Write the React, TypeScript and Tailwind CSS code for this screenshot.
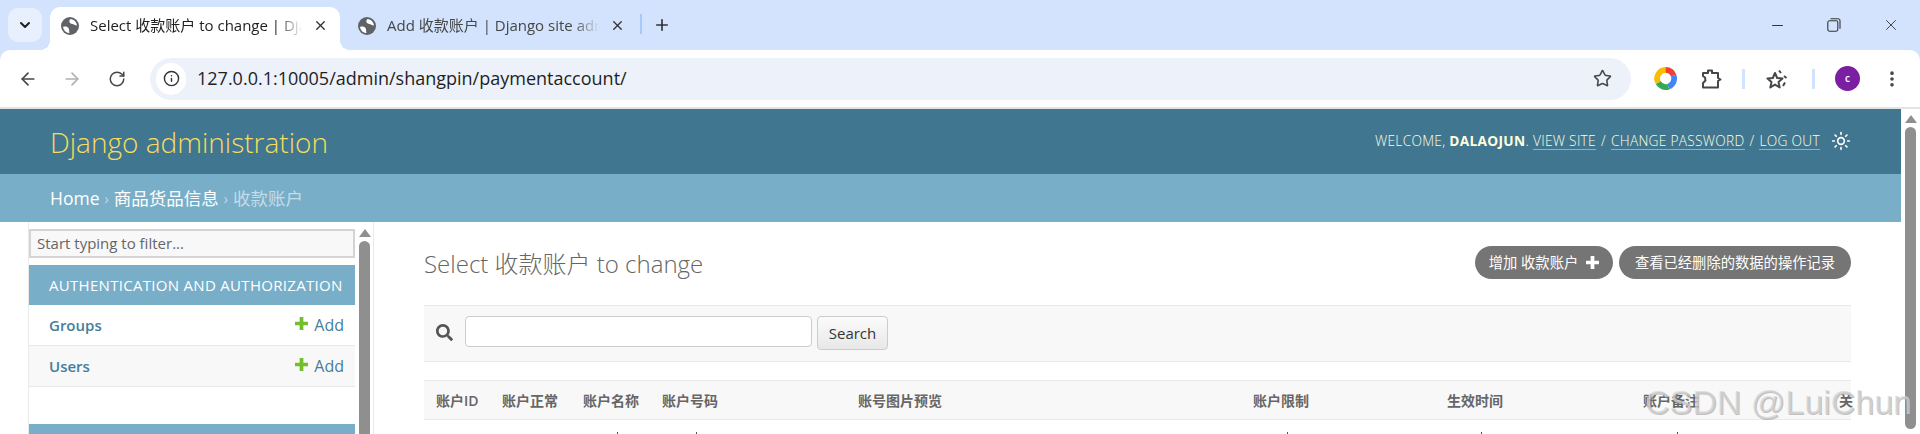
import { ArrowLeft, ArrowRight, ChevronDown, EllipsisVertical, Info, Minus, Plus, RotateCw, Star, Sun, X } from 'lucide-react'
import { FaSearch } from 'react-icons/fa'

const columns = ['账户ID', '账户正常', '账户名称', '账户号码', '账号图片预览', '账户限制', '生效时间', '账户备注', '关']
const cutOffCells = [false, false, true, true, false, true, true, true, false]

const Globe = () => (
  <svg viewBox="0 0 16 16" className="w-[18px] h-[18px] shrink-0">
    <circle cx="8" cy="8" r="8" fill="#5f6368" />
    <path d="M8.500 1.800 C6.500 3.500 7.500 6 10 6.200 C11.500 6.300 12 7.500 14.200 7.500 C14 4.800 11.500 2 8.500 1.800z" fill="#fff" />
    <path d="M1.800 8.800 C3.500 8 6 8.500 6.800 10 C7.500 11.500 7 13 7.500 14.200 C4.500 14 2.200 11.800 1.800 8.800z" fill="#fff" />
  </svg>
)

const ThickPlus = ({ className }: { className: string }) => (
  <svg viewBox="0 0 14 14" className={className} fill="currentColor">
    <path d="M5 0h4v5h5v4H9v5H5V9H0V5h5z" />
  </svg>
)

const Tab = ({ title, active }: { title: string; active?: boolean }) => (
  <div className={`relative h-[43px] w-[290px] shrink-0 flex items-center pl-[11px] pr-[12px] pb-[6px] gap-[11px] rounded-t-[10px] ${active ? "bg-white text-[#1f1f1f] before:content-[''] before:absolute before:left-[-10px] before:bottom-0 before:w-[10px] before:h-[10px] before:bg-[radial-gradient(circle_at_0_0,transparent_10px,white_10px)] after:content-[''] after:absolute after:right-[-10px] after:bottom-0 after:w-[10px] after:h-[10px] after:bg-[radial-gradient(circle_at_100%_0,transparent_10px,white_10px)]" : 'text-[#444746]'}`}>
    <Globe />
    <span className="flex-1 min-w-0 overflow-hidden whitespace-nowrap text-[15px] [mask-image:linear-gradient(to_right,black_88%,transparent)]">{title}</span>
    <X size={15} strokeWidth={2.2} className="shrink-0 text-[#333]" />
  </div>
)

const ModelRow = ({ name, alt }: { name: string; alt?: boolean }) => (
  <div className={`h-[41px] flex items-center justify-between pl-5 pr-[11px] border-b border-[#e8e8e8] text-[15px] ${alt ? 'bg-[#f8f8f8]' : 'bg-white'}`}>
    <span className="font-semibold text-[#447e9b]">{name}</span>
    <span className="flex items-center text-[16px] text-[#447e9b]">
      <ThickPlus className="text-[#70bf2b] w-[13px] h-[13px] mr-[6px] -mt-1" />
      Add
    </span>
  </div>
)

export default function App() {
  return (
    <div className="w-[1920px] h-[434px] overflow-hidden relative flex flex-col bg-white font-['Open_Sans','Noto_Sans_CJK_SC',sans-serif]">
      {/* tab strip */}
      <div className="h-[50px] bg-[#d3e3fd] flex items-end shrink-0">
        <div className="w-[34px] h-[34px] ml-2 mb-2 rounded-[10px] bg-[#e9f0fd] flex items-center justify-center shrink-0">
          <ChevronDown size={16} strokeWidth={3} className="text-[#1f1f1f]" />
        </div>
        <div className="ml-2 flex gap-[7px]">
          <Tab title="Select 收款账户 to change | Django site admin" active />
          <Tab title="Add 收款账户 | Django site admin" />
        </div>
        <div className="w-[2px] h-5 bg-[#a8c7fa] mb-[16px] ml-[3px]" />
        <Plus size={18} strokeWidth={2.2} className="ml-[11px] mb-[16px] text-[#333]" />
        <div className="ml-auto flex items-center gap-[41px] pr-[20px] self-center text-[#333]">
          <Minus size={17} strokeWidth={1.4} />
          <svg viewBox="0 0 14 14" className="w-[14px] h-[14px]" fill="none" stroke="#333" strokeWidth="1.1">
            <rect x="0.8" y="2.8" width="10" height="10.4" rx="1.6" />
            <path d="M3.5 0.8h7.5a2 2 0 0 1 2 2v8" />
          </svg>
          <X size={18} strokeWidth={1.2} />
        </div>
      </div>

      {/* toolbar */}
      <div className="bg-[#d3e3fd] shrink-0">
        <div className="h-[57px] bg-white rounded-t-[10px] flex items-center pl-[18px]">
          <ArrowLeft size={20} className="shrink-0 text-[#474747]" />
          <ArrowRight size={20} className="shrink-0 ml-[24px] text-[#b0b0b0]" />
          <RotateCw size={18} className="shrink-0 ml-[26px] text-[#474747]" />
          <div className="shrink-0 ml-[24px] w-[1481px] h-[42px] rounded-full bg-[#ecf1fa] flex items-center pl-[6px] pr-[19px]">
            <div className="w-[30px] h-[32px] rounded-full bg-white flex items-center justify-center">
              <Info size={17} strokeWidth={2} className="text-[#333]" />
            </div>
            <span className="ml-[11px] text-[18px] text-[#1f1f1f]">127.0.0.1:10005/admin/shangpin/paymentaccount/</span>
            <Star size={19} strokeWidth={2} className="ml-auto text-[#474747]" />
          </div>
          <svg viewBox="0 0 24 24" className="shrink-0 w-[23px] h-[23px] ml-[23px]" fill="none" strokeWidth="6">
            <path d="M4.5 16.5 A9 9 0 0 1 12 3" stroke="#fbbc04" />
            <path d="M12 3 A9 9 0 0 1 20.5 9" stroke="#ea4335" />
            <path d="M20.5 9 A9 9 0 0 1 15 20.5" stroke="#4285f4" />
            <path d="M15 20.5 A9 9 0 0 1 4.5 16.5" stroke="#34a853" />
          </svg>
          <svg viewBox="0 0 24 24" className="shrink-0 w-[24px] h-[24px] ml-[22px]" fill="none" stroke="#474747" strokeWidth="2" strokeLinejoin="round">
            <path d="M4 6h5V3.500h4V6h6v5l2.500 1.500L19 14v6.500H4V16l2.500-2.500L6 10.500 4 9z" />
          </svg>
          <div className="shrink-0 w-[3px] h-5 bg-[#d3e3fd] ml-[19px]" />
          <svg viewBox="0 0 24 24" className="shrink-0 w-[24px] h-[24px] ml-[20px]" fill="none" stroke="#474747" strokeWidth="2" strokeLinejoin="round">
            <path d="M10 6l2.200 5 5.300.5-4 3.600 1.200 5.300-4.700-2.800-4.700 2.800 1.200-5.300-4-3.600 5.300-.5z" />
            <path d="M14 3.500l2 2.500M19 9l2.500 2M18 19l2-3.500" />
          </svg>
          <div className="shrink-0 w-[3px] h-5 bg-[#d3e3fd] ml-[23px]" />
          <div className="shrink-0 w-[25px] h-[25px] rounded-full bg-[#7b1fa2] text-white text-[10px] font-semibold flex items-center justify-center ml-[20px]">c</div>
          <EllipsisVertical size={20} strokeWidth={2.4} className="shrink-0 ml-[22px] text-[#474747]" />
        </div>
      </div>
      <div className="h-[2px] bg-[#e2e3e3] shrink-0" />

      {/* page + browser scrollbar */}
      <div className="flex-1 min-h-0 flex">
        <div className="flex-1 min-w-0 flex flex-col">
          <div className="h-[65px] bg-[#417690] flex items-center justify-between pl-[50px] pr-[50px] shrink-0">
            <span className="text-[28px] font-light text-[#f5dd5d] leading-none">Django administration</span>
            <div className="flex items-center text-[13.700px] font-light text-[#ffffe0] tracking-[0.3px]">
              <span>WELCOME, <strong className="font-bold">DALAOJUN</strong>. </span>
              <span className="ml-1 border-b border-[#8fb1c4] leading-[17px]">VIEW SITE</span>
              <span className="mx-[5px]">/</span>
              <span className="border-b border-[#8fb1c4] leading-[17px]">CHANGE PASSWORD</span>
              <span className="mx-[5px]">/</span>
              <span className="border-b border-[#8fb1c4] leading-[17px]">LOG OUT</span>
              <Sun size={20} className="ml-[11px] text-white" />
            </div>
          </div>
          <div className="h-[48px] bg-[#79aec8] flex items-center pl-[50px] text-[17.500px] text-white shrink-0">
            <span>Home</span>
            <span className="mx-[5px] text-[#c4dce8] text-[14px]">›</span>
            <span>商品货品信息</span>
            <span className="mx-[5px] text-[#c4dce8] text-[14px]">›</span>
            <span className="text-[#c4dce8]">收款账户</span>
          </div>

          <div className="flex-1 min-h-0 flex overflow-hidden">
            {/* app sidebar */}
            <div className="ml-[28px] w-[346px] shrink-0 border-x border-[#eaeaea] flex">
              <div className="w-[326px] shrink-0 pt-[7px]">
                <div className="h-[29px] border-2 border-[#d4d4d4] bg-[#f8f8f8] flex items-center pl-[6px] text-[15px] text-[#666]">Start typing to filter...</div>
                <div className="mt-[7px] h-10 bg-[#79aec8] flex items-center pl-5 text-[15px] text-white tracking-[0.3px] whitespace-nowrap">AUTHENTICATION AND AUTHORIZATION</div>
                <ModelRow name="Groups" />
                <ModelRow name="Users" alt />
                <div className="mt-[37px] h-10 bg-[#79aec8]" />
              </div>
              <div className="flex-1 flex flex-col items-center pt-[7px] pr-[2px] pl-[3px]">
                <div className="w-0 h-0 border-x-[6px] border-x-transparent border-b-[8px] border-b-[#8f8f8f]" />
                <div className="mt-[4px] w-[11px] flex-1 rounded-t-full bg-[#8f8f8f]" />
              </div>
            </div>

            {/* change list */}
            <div className="flex-1 min-w-0 pl-[50px] pr-[50px]">
              <div className="h-[83px] flex justify-between pt-6">
                <h1 className="text-[24px] font-light text-[#666] leading-[32px] pt-[2px]">Select 收款账户 to change</h1>
                <div className="flex gap-[6px] text-[14.300px] text-white">
                  <span className="h-[33px] w-[138px] rounded-full bg-[#757575] flex items-center justify-center gap-[8px]">增加 收款账户<ThickPlus className="w-[13px] h-[13px]" /></span>
                  <span className="h-[33px] w-[232px] rounded-full bg-[#757575] flex items-center justify-center">查看已经删除的数据的操作记录</span>
                </div>
              </div>
              <div className="h-[57px] bg-[#f8f8f8] border-y border-[#e8e8e8] flex items-start pt-[10px] pl-[12px]">
                <FaSearch className="w-[17px] h-[17px] text-[#555] mt-[8px]" />
                <div className="ml-[12px] w-[347px] h-[31px] bg-white border border-[#cccccc] rounded-[4px]" />
                <div className="ml-[5px] w-[71px] h-[34px] rounded-[4px] border border-[#cccccc] bg-gradient-to-b from-[#fbfbfb] to-[#e8e8e8] flex items-center justify-center text-[15px] text-[#333]">Search</div>
              </div>
              <div className="mt-[18px] h-[40px] bg-[#f8f8f8] border-y border-[#e8e8e8] pl-[12px] grid grid-cols-[66px_81px_79px_196px_395px_194px_196px_196px_1fr] items-center text-[14px] font-semibold text-[#666]">
                {columns.map((c) => (
                  <span key={c} className="whitespace-nowrap">{c}</span>
                ))}
              </div>
              <div className="pl-[12px] pt-[12px] grid grid-cols-[66px_81px_79px_196px_395px_194px_196px_196px_1fr]">
                {cutOffCells.map((on, i) => (
                  <div key={i}>{on && <div className="ml-[34px] w-px h-[3px] bg-[#555]" />}</div>
                ))}
              </div>
            </div>
          </div>
        </div>

        {/* browser scrollbar */}
        <div className="w-[19px] shrink-0 bg-white flex flex-col items-center pt-[6px]">
          <div className="w-0 h-0 border-x-[6px] border-x-transparent border-b-[8px] border-b-[#8f8f8f]" />
          <div className="mt-[4px] w-[11px] h-[302px] rounded-full bg-[#8f8f8f]" />
        </div>
      </div>

      {/* CSDN watermark */}
      <div className="absolute left-[1645px] top-[385px] text-[34px] font-['Liberation_Sans',sans-serif] leading-none whitespace-nowrap text-[#d4d4d4]/70 [text-shadow:1px_1px_0_#8a8a8a80]">CSDN @LuiChun</div>
    </div>
  )
}
